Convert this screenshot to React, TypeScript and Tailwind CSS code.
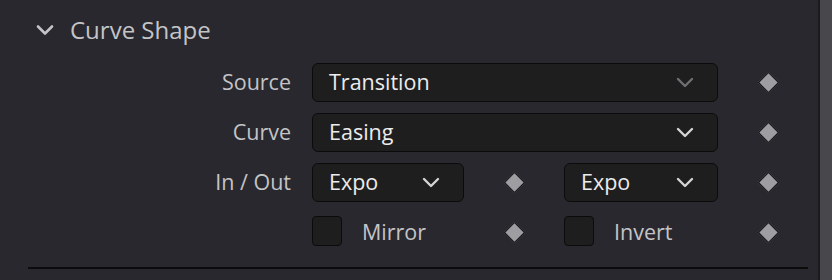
import React from "react";

const font = { fontFamily: '"Open Sans", "Noto Sans", sans-serif' };

function Chevron({ dim = false }: { dim?: boolean }) {
  return (
    <svg width="18" height="11" viewBox="0 0 18 11" fill="none">
      <path
        d="M2 2 L9 9 L16 2"
        stroke={dim ? "#6f6f72" : "#d4d4d6"}
        strokeWidth="2.4"
        strokeLinecap="round"
        strokeLinejoin="round"
      />
    </svg>
  );
}

function Diamond() {
  return <div className="w-[15px] h-[15px] rotate-45 bg-[#9d9da2] border border-[#0c0c0d]" />;
}

function KeyCell({ w = "w-[100px]" }: { w?: string }) {
  return (
    <div className={`${w} h-full flex items-center justify-center`}>
      <Diamond />
    </div>
  );
}

function Dropdown({ value, width, dim = false }: { value: string; width: string; dim?: boolean }) {
  return (
    <div
      className={`${width} h-[39px] flex items-center justify-between pl-[16px] pr-[23px] rounded-[6px] bg-[#1e1e1f] border border-[#0b0b0c] text-[21.5px] text-[#ececec]`}
    >
      <span>{value}</span>
      <Chevron dim={dim} />
    </div>
  );
}

function Label({ text }: { text: string }) {
  return <div className="w-[292px] text-right text-[21.5px] text-[#c4c4c7] pr-[1px]">{text}</div>;
}

function Checkbox({ label }: { label: string }) {
  return (
    <div className="flex items-center h-full">
      <div className="w-[30px] h-[30px] mt-[-2px] rounded-[4px] bg-[#1e1e1f] border border-[#0b0b0c]" />
      <span className="ml-[20px] text-[21.5px] text-[#c4c4c7]">{label}</span>
    </div>
  );
}

export default function App() {
  return (
    <div className="w-[832px] h-[280px] bg-[#28282e] flex overflow-hidden" style={font}>
      <div className="flex-1 flex flex-col">
        {/* header */}
        <div className="h-[57px] flex items-center pl-[36px] pt-[3px]">
          <svg width="18" height="12" viewBox="0 0 18 12" fill="none">
            <path d="M2 2.5 L9 9.5 L16 2.5" stroke="#c4c4c7" strokeWidth="2.6" strokeLinecap="round" strokeLinejoin="round" />
          </svg>
          <span className="ml-[16px] text-[24px] text-[#c4c4c7]">Curve Shape</span>
        </div>

        {/* rows */}
        <div className="flex flex-col">
          <div className="h-[50px] flex items-center">
            <Label text="Source" />
            <div className="ml-[20px]">
              <Dropdown value="Transition" width="w-[406px]" dim />
            </div>
            <KeyCell />
          </div>
          <div className="h-[50px] flex items-center">
            <Label text="Curve" />
            <div className="ml-[20px]">
              <Dropdown value="Easing" width="w-[406px]" />
            </div>
            <KeyCell />
          </div>
          <div className="h-[50px] flex items-center">
            <Label text="In / Out" />
            <div className="ml-[20px] flex items-center h-full">
              <Dropdown value="Expo" width="w-[152px]" />
              <KeyCell />
              <Dropdown value="Expo" width="w-[154px]" />
            </div>
            <KeyCell />
          </div>
          <div className="h-[50px] flex items-center">
            <div className="w-[292px]" />
            <div className="ml-[20px] flex items-center h-full">
              <div className="w-[152px] h-full">
                <Checkbox label="Mirror" />
              </div>
              <KeyCell />
              <div className="w-[154px] h-full">
                <Checkbox label="Invert" />
              </div>
            </div>
            <KeyCell />
          </div>
        </div>

        <div className="ml-[28px] w-[780px] h-[2px] mt-[10px] bg-[#0c0c0d]" />
      </div>

      {/* scrollbar */}
      <div className="w-[18px] h-full flex">
        <div className="w-[2px] bg-[#1c1c1f]" />
        <div className="w-[14px] bg-[#48474c]" />
        <div className="w-[2px] bg-[#1c1c1f]" />
      </div>
    </div>
  );
}
